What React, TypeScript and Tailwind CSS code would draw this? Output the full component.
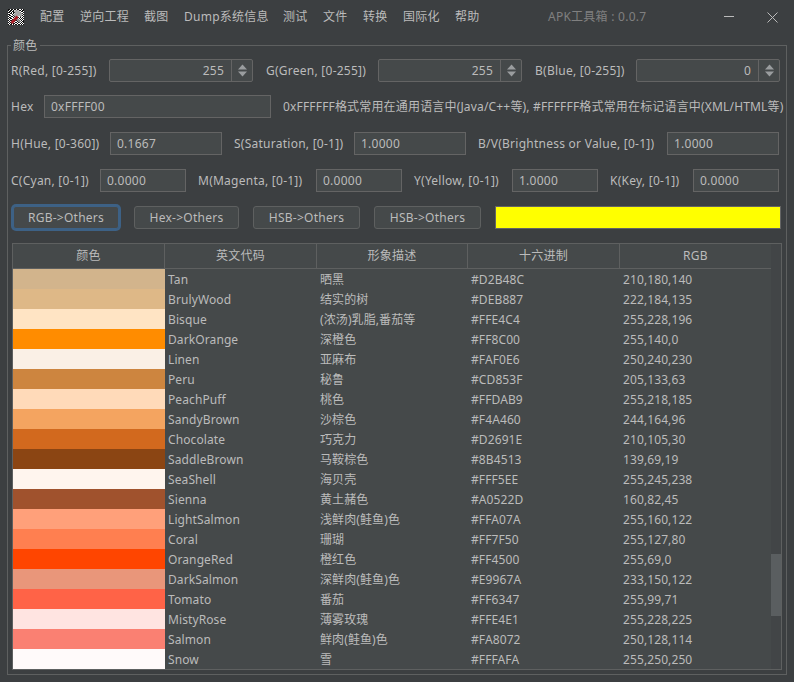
import React from 'react';

const FONT = 'font-["Noto_Sans","Noto_Sans_CJK_SC",sans-serif]';

// =====================================================
// DATA
// =====================================================
const MENU = [
    { label: '配置', w: 'w-[40px]' },
    { label: '逆向工程', w: 'w-[64px]' },
    { label: '截图', w: 'w-[40px]' },
    { label: 'Dump系统信息', w: 'w-[99px]' },
    { label: '测试', w: 'w-[40px]' },
    { label: '文件', w: 'w-[40px]' },
    { label: '转换', w: 'w-[40px]' },
    { label: '国际化', w: 'w-[52px]' },
    { label: '帮助', w: 'w-[40px]' },
];

const COLORS: [string, string, string, string][] = [
    ['Tan', '晒黑', '#D2B48C', '210,180,140'],
    ['BrulyWood', '结实的树', '#DEB887', '222,184,135'],
    ['Bisque', '(浓汤)乳脂,番茄等', '#FFE4C4', '255,228,196'],
    ['DarkOrange', '深橙色', '#FF8C00', '255,140,0'],
    ['Linen', '亚麻布', '#FAF0E6', '250,240,230'],
    ['Peru', '秘鲁', '#CD853F', '205,133,63'],
    ['PeachPuff', '桃色', '#FFDAB9', '255,218,185'],
    ['SandyBrown', '沙棕色', '#F4A460', '244,164,96'],
    ['Chocolate', '巧克力', '#D2691E', '210,105,30'],
    ['SaddleBrown', '马鞍棕色', '#8B4513', '139,69,19'],
    ['SeaShell', '海贝壳', '#FFF5EE', '255,245,238'],
    ['Sienna', '黄土赭色', '#A0522D', '160,82,45'],
    ['LightSalmon', '浅鲜肉(鲑鱼)色', '#FFA07A', '255,160,122'],
    ['Coral', '珊瑚', '#FF7F50', '255,127,80'],
    ['OrangeRed', '橙红色', '#FF4500', '255,69,0'],
    ['DarkSalmon', '深鲜肉(鲑鱼)色', '#E9967A', '233,150,122'],
    ['Tomato', '番茄', '#FF6347', '255,99,71'],
    ['MistyRose', '薄雾玫瑰', '#FFE4E1', '255,228,225'],
    ['Salmon', '鲜肉(鲑鱼)色', '#FA8072', '250,128,114'],
    ['Snow', '雪', '#FFFAFA', '255,250,250'],
];

// 16x16 noise of the app icon, 1 = black
const ICON_BITS = [
    '1101101101100101',
    '1011010010011011',
    '0110110110100110',
    '1101011001011001',
    '0011010100110110',
    '1100101011001001',
    '0110010100110110',
    '1001101001001001',
    '0110010110101010',
    '1011001001010101',
    '0100110100101010',
    '1011000110110101',
    '0100011001001011',
    '1010100110110101',
    '0101011001001010',
    '1011010110110101',
];

const HEADERS = ['颜色', '英文代码', '形象描述', '十六进制', 'RGB'];

// =====================================================
// SMALL PARTS
// =====================================================
function AppIcon() {
    return (
        <svg width="16" height="16" viewBox="0 0 16 16" className="shrink-0" shapeRendering="crispEdges">
            <rect width="16" height="16" fill="#ffffff" />
            {ICON_BITS.map((row, y) =>
                row.split('').map((b, x) =>
                    b === '1' ? <rect key={`${x}-${y}`} x={x} y={y} width="1" height="1" fill="#111111" /> : null
                )
            )}
            <g shapeRendering="auto">
                <path d="M6 1.5 L10 1 L14.5 5 L13.5 8 L11 7 L8 9 L5.5 6 L7 4 Z" fill="#a6a6a6" />
                <path d="M8 7.5 L13 12.5 L11.5 14 L6.5 9 Z" fill="#8d8d8d" />
                <path d="M2.5 13 L8.5 6.5 L10.5 8.5 L4.5 15 Z" fill="#a81c26" />
            </g>
        </svg>
    );
}

function Field({ value, w }: { value: string; w: string }) {
    return (
        <div className={`${w} h-[23px] shrink-0 bg-[#45494a] border border-[#646464] pl-[6px] flex items-center`}>
            {value}
        </div>
    );
}

function Spinner({ value }: { value: string }) {
    return (
        <div className="w-[144px] h-[23px] shrink-0 flex bg-[#45494a] border border-[#646464] rounded-[2px]">
            <div className="flex-1 flex items-center justify-end pr-[7px]">{value}</div>
            <div className="w-[21px] border-l border-[#646464] flex items-center justify-center">
                <svg width="9" height="13" viewBox="0 0 9 13">
                    <path d="M4.5 0.5 L9 5.5 H0 Z" fill="#9a9d9f" />
                    <path d="M0 7.5 H9 L4.5 12.5 Z" fill="#9a9d9f" />
                </svg>
            </div>
        </div>
    );
}

function Label({ text, w }: { text: string; w: string }) {
    return <span className={`${w} shrink-0 whitespace-nowrap`}>{text}</span>;
}

function ActionButton({ text, w, focused }: { text: string; w: string; focused?: boolean }) {
    return (
        <button
            className={`${w} h-[23px] shrink-0 rounded-[3px] bg-[#45494a] border ${
                focused ? 'border-[#3d6185] ring-2 ring-[#3d6185]' : 'border-[#5e6060]'
            }`}
        >
            {text}
        </button>
    );
}

const COLS = 'grid grid-cols-[152px_152px_151px_152px_151px]';

// =====================================================
// MAIN
// =====================================================
export default function App() {
    return (
        <div className={`w-[794px] h-[682px] overflow-hidden bg-[#3c3f41] text-[#bbbbbb] text-[12px] tracking-[0.25px] ${FONT} flex flex-col`}>
            {/* Title bar */}
            <div className="h-[34px] shrink-0 flex items-center pl-[8px]">
                <AppIcon />
                <div className="flex ml-[16px]">
                    {MENU.map((m) => (
                        <span key={m.label} className={`${m.w} whitespace-nowrap`}>{m.label}</span>
                    ))}
                </div>
                <span className="ml-[53px] w-[126px] text-[#808080] whitespace-nowrap">APK工具箱 : 0.0.7</span>
                <svg width="10" height="10" viewBox="0 0 10 10" className="ml-[50px]">
                    <path d="M0 4.5 H10" stroke="#bbbbbb" strokeWidth="1" />
                </svg>
                <svg width="11" height="11" viewBox="0 0 11 11" className="ml-[33px]">
                    <path d="M0.5 0.5 L10.5 10.5 M10.5 0.5 L0.5 10.5" stroke="#bbbbbb" strokeWidth="1" />
                </svg>
            </div>

            {/* Color panel */}
            <fieldset className="mx-[7px] mt-[3px] h-[638px] min-w-0 border border-[#5e6060] pl-[3px] pr-[5px]">
                <legend className="px-[2px] pt-[2px] leading-[14px]">颜色</legend>

                <div className="flex flex-col mt-[6px]">
                    <div className="flex items-center h-[23px]">
                        <Label text="R(Red, [0-255])" w="w-[98px]" />
                        <Spinner value="255" />
                        <Label text="G(Green, [0-255])" w="w-[112px] ml-[13px]" />
                        <Spinner value="255" />
                        <Label text="B(Blue, [0-255])" w="w-[101px] ml-[13px]" />
                        <Spinner value="0" />
                    </div>

                    <div className="flex items-center h-[23px] mt-[13px]">
                        <Label text="Hex" w="w-[33px]" />
                        <Field value="0xFFFF00" w="w-[227px]" />
                        <span className="ml-[12px] whitespace-nowrap tracking-[0.17px]">
                            0xFFFFFF格式常用在通用语言中(Java/C++等), #FFFFFF格式常用在标记语言中(XML/HTML等)
                        </span>
                    </div>

                    <div className="flex items-center h-[23px] mt-[14px]">
                        <Label text="H(Hue, [0-360])" w="w-[99px]" />
                        <Field value="0.1667" w="w-[112px]" />
                        <Label text="S(Saturation, [0-1])" w="w-[120px] ml-[12px]" />
                        <Field value="1.0000" w="w-[112px]" />
                        <Label text="B/V(Brightness or Value, [0-1])" w="w-[189px] ml-[12px]" />
                        <Field value="1.0000" w="w-[112px]" />
                    </div>

                    <div className="flex items-center h-[23px] mt-[14px]">
                        <Label text="C(Cyan, [0-1])" w="w-[89px]" />
                        <Field value="0.0000" w="w-[86px]" />
                        <Label text="M(Magenta, [0-1])" w="w-[118px] ml-[12px]" />
                        <Field value="0.0000" w="w-[86px]" />
                        <Label text="Y(Yellow, [0-1])" w="w-[98px] ml-[12px]" />
                        <Field value="1.0000" w="w-[86px]" />
                        <Label text="K(Key, [0-1])" w="w-[83px] ml-[12px]" />
                        <Field value="0.0000" w="w-[86px]" />
                    </div>

                    <div className="flex items-center h-[23px] mt-[14px]">
                        <div className="ml-[2px] flex">
                            <ActionButton text="RGB->Others" w="w-[106px]" focused />
                        </div>
                        <ActionButton text="Hex->Others" w="w-[105px] ml-[15px]" />
                        <ActionButton text="HSB->Others" w="w-[107px] ml-[14px]" />
                        <ActionButton text="HSB->Others" w="w-[107px] ml-[14px]" />
                        <div className="w-[287px] h-[23px] ml-[14px] bg-[#ffff00] border border-[#646464]" />
                    </div>

                    {/* Table */}
                    <div className="mt-[14px] ml-[1px] w-[770px] h-[427px] border border-[#5e6060] bg-[#45494a] flex flex-col overflow-hidden">
                        <div className="flex shrink-0 h-[25px]">
                            <div className={`${COLS} w-[758px] border-b border-[#5e6060]`}>
                                {HEADERS.map((h, i) => (
                                    <div
                                        key={h}
                                        className={`flex items-center justify-center ${i < 4 ? 'border-r border-[#5e6060]' : ''}`}
                                    >
                                        {h}
                                    </div>
                                ))}
                            </div>
                            <div className="w-[10px] bg-[#424547]" />
                        </div>
                        <div className="flex flex-1 min-h-0">
                            <div className="w-[758px] tracking-[0.1px]">
                                {COLORS.map(([name, desc, hex, rgb]) => (
                                    <div key={name} className={`${COLS} h-[20px] items-center`}>
                                        <div className="h-[20px]" style={{ backgroundColor: hex }} />
                                        <div className="pl-[3px] pt-[1px]">{name}</div>
                                        <div className="pl-[3px] pt-[1px] whitespace-nowrap">{desc}</div>
                                        <div className="pl-[3px] pt-[1px]">{hex}</div>
                                        <div className="pl-[3px] pt-[1px]">{rgb}</div>
                                    </div>
                                ))}
                            </div>
                            <div className="w-[10px] bg-[#424547] flex flex-col">
                                <div className="h-[285px] shrink-0" />
                                <div className="h-[62px] shrink-0 bg-[#5a5e60]" />
                            </div>
                        </div>
                    </div>
                </div>
            </fieldset>
        </div>
    );
}
